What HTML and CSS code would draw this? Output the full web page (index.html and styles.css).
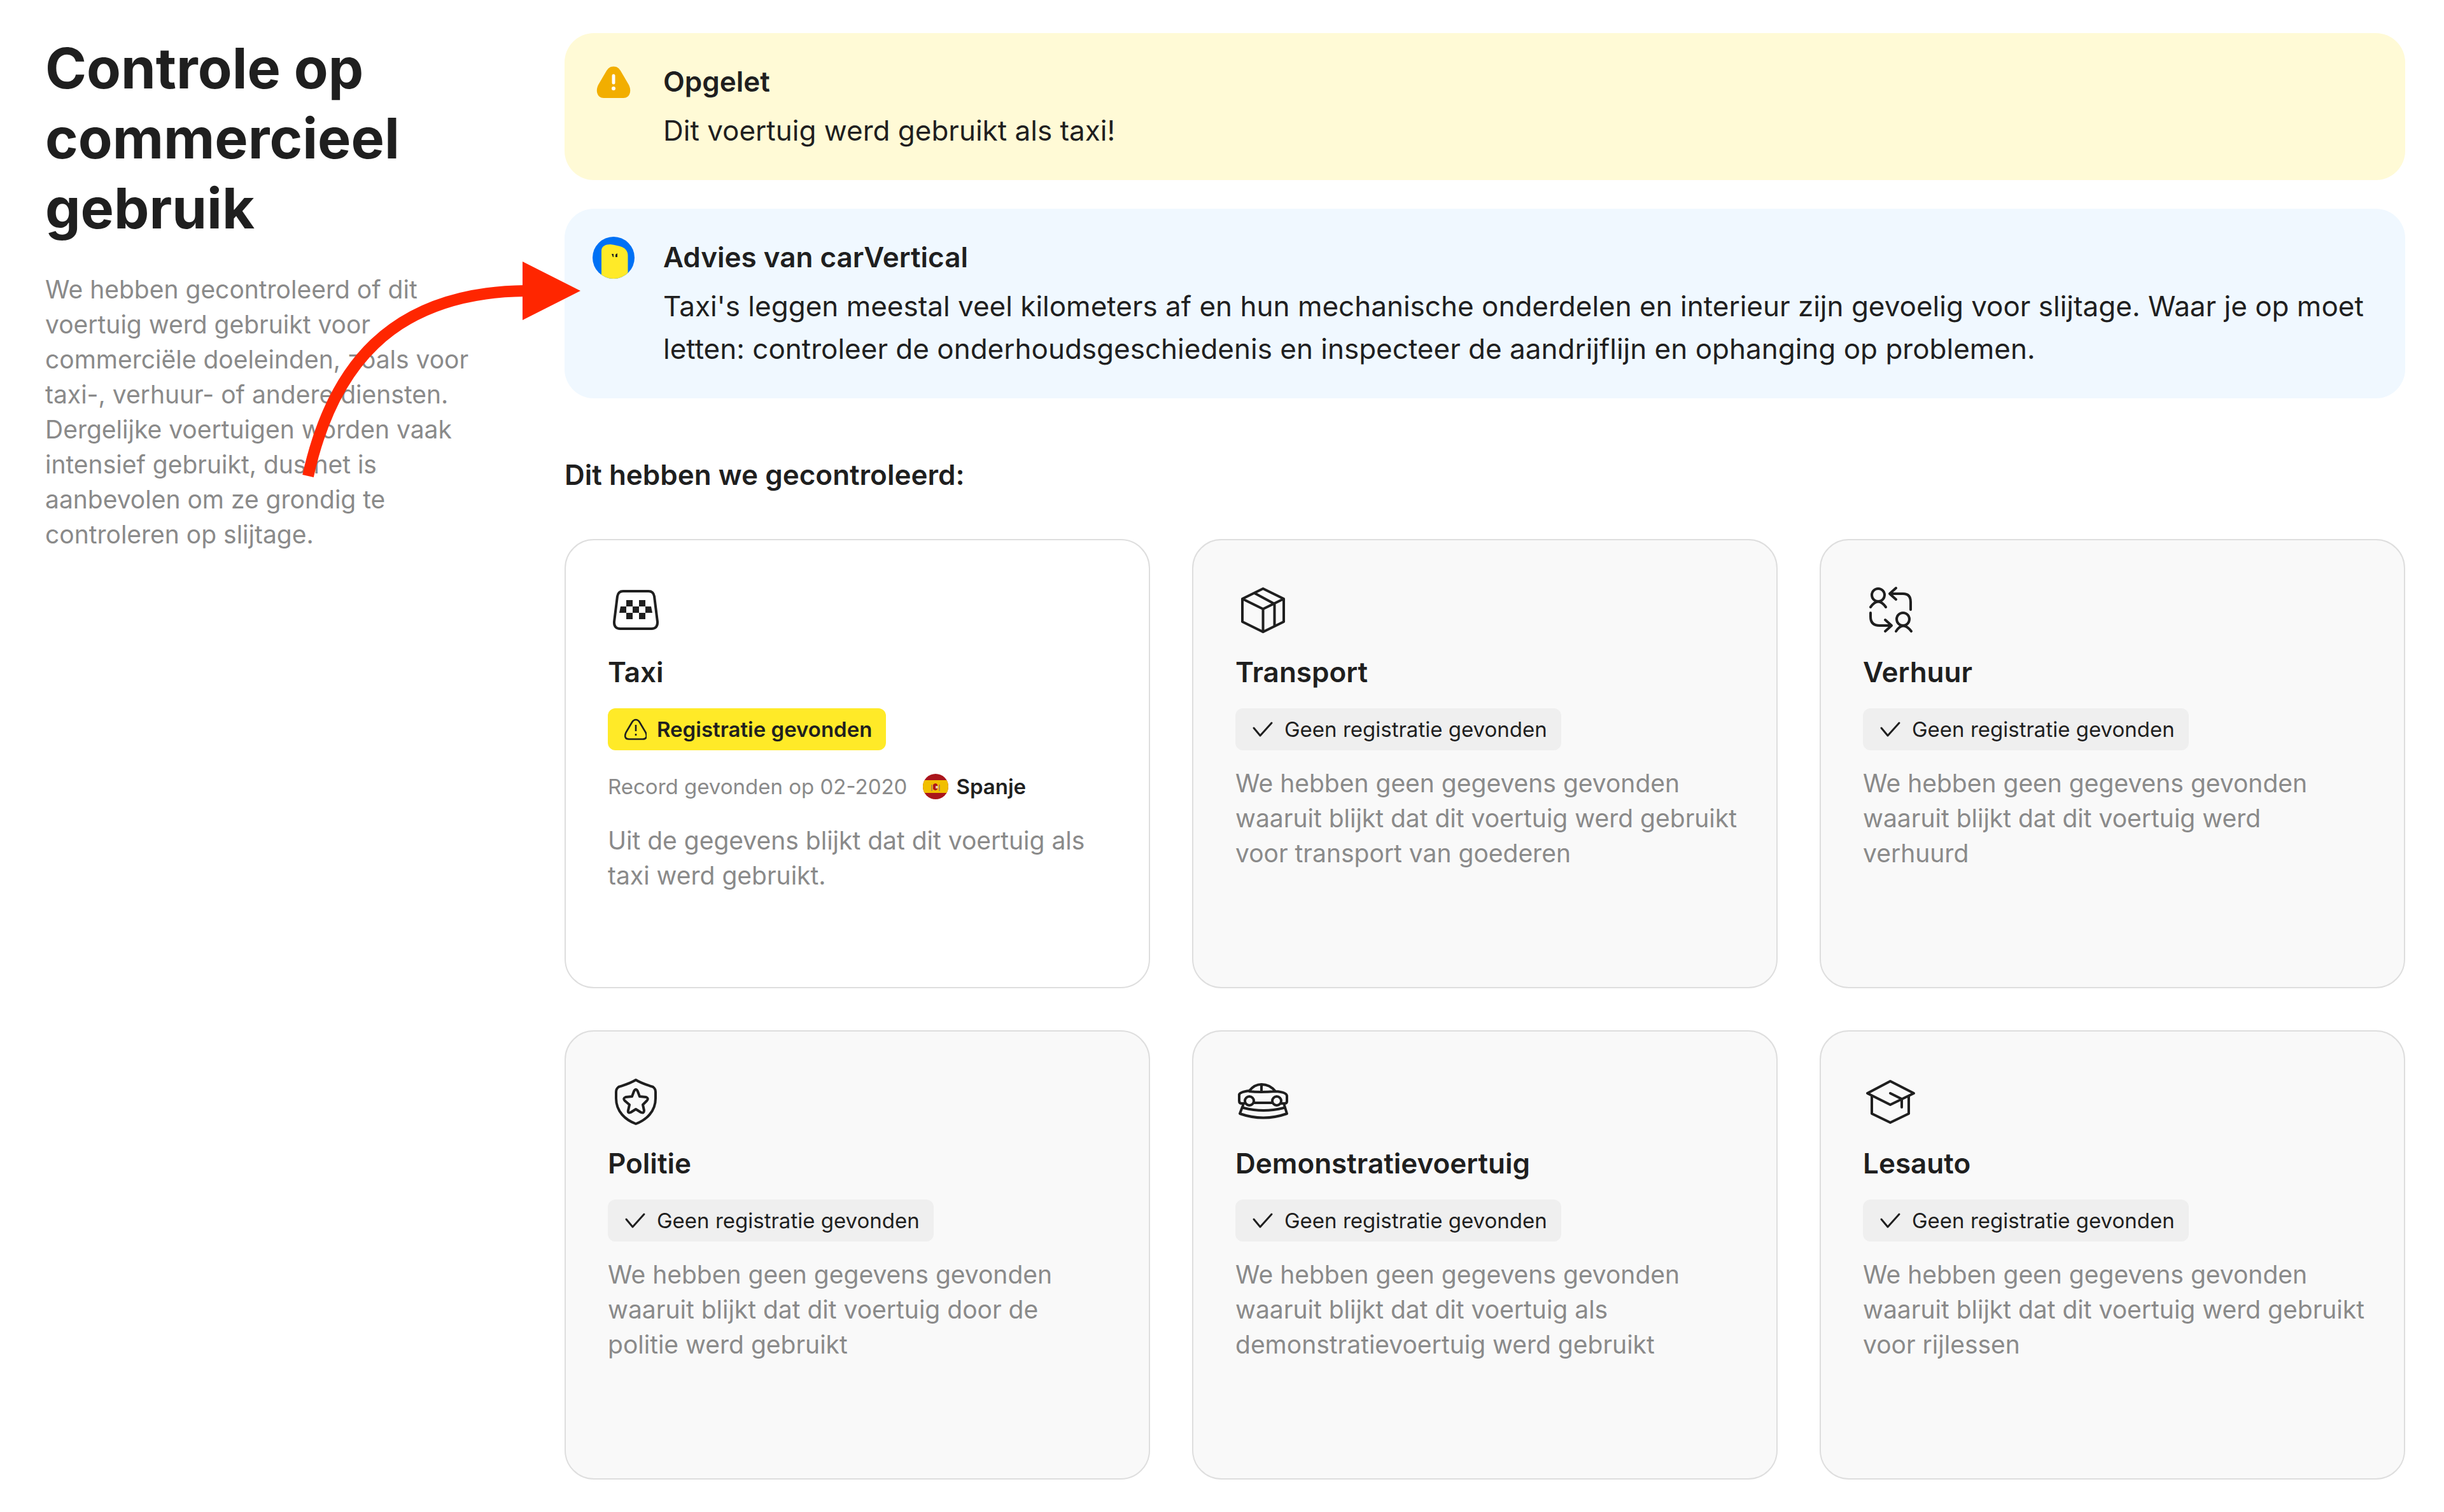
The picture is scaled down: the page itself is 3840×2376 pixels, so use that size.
FILE: index.html
```html
<!DOCTYPE html>
<html lang="nl">
<head>
<meta charset="utf-8">
<title>Controle op commercieel gebruik</title>
<link rel="stylesheet" href="styles.css">
</head>
<body>
<svg class="sprite" aria-hidden="true">
  <symbol id="check" viewBox="0 0 36 36"><path d="M4 16L14 28L32 8" fill="none" stroke="currentColor" stroke-width="3" stroke-linecap="round" stroke-linejoin="round"/></symbol>
</svg>
<main class="page">
  <aside class="intro">
    <h1 class="intro-title">Controle op commercieel gebruik</h1>
    <p class="intro-text">We hebben gecontroleerd of dit voertuig werd gebruikt voor commerciële doeleinden, zoals voor taxi-, verhuur- of andere diensten. Dergelijke voertuigen worden vaak intensief gebruikt, dus het is aanbevolen om ze grondig te controleren op slijtage.</p>
    <svg class="pointer" viewBox="0 0 440 350" aria-hidden="true">
      <path d="M13 337C50 170 140 48 355 46" fill="none" stroke="#ff2600" stroke-width="18"/>
      <path d="M350 0L441 46L350 92Z" fill="#ff2600"/>
    </svg>
  </aside>
  <div class="report">
    <section class="alert alert-warning">
      <svg class="alert-icon" viewBox="0 0 66 66" aria-hidden="true">
        <path d="M33 8.500C27 8.500 24 12 21.500 16L9.500 36.500C4 46 7 58 17.500 58H48.500C59 58 62 46 56.500 36.500L44.500 16C42 12 39 8.500 33 8.500Z" fill="#f2ae00"/>
        <path d="M33 23V34" stroke="#fff" stroke-width="5" stroke-linecap="round"/><circle cx="33" cy="43" r="3" fill="#fff"/>
      </svg>
      <div class="alert-body">
        <h2 class="alert-title">Opgelet</h2>
        <p class="alert-text">Dit voertuig werd gebruikt als taxi!</p>
      </div>
    </section>
    <section class="alert alert-advice">
      <svg class="alert-icon" viewBox="0 0 66 66" aria-hidden="true">
        <defs><clipPath id="face"><circle cx="33" cy="33" r="33"/></clipPath></defs>
        <g clip-path="url(#face)"><rect width="66" height="66" fill="#0071f5"/>
        <path d="M14 66V22C14 15 20 12 28 12C35 13 41 14 46 16C53 19 55.500 24 55.500 30V66Z" fill="#ffea28"/></g>
        <path d="M30 27h3v5h-1zM36 28l3-2v6h-3z" fill="#1f1f1f"/>
      </svg>
      <div class="alert-body">
        <h2 class="alert-title">Advies van carVertical</h2>
        <p class="alert-text">Taxi's leggen meestal veel kilometers af en hun mechanische onderdelen en interieur zijn gevoelig voor slijtage. Waar je op moet letten: controleer de onderhoudsgeschiedenis en inspecteer de aandrijflijn en ophanging op problemen.</p>
      </div>
    </section>
    <h2 class="checks-title">Dit hebben we gecontroleerd:</h2>
    <div class="checks">
      <article class="card card-found">
        <svg class="card-icon" viewBox="0 0 88 88" aria-hidden="true">
          <path d="M24 14H64Q71.500 14 73 22L78 62Q78.500 73 68.500 73H19.500Q9.500 73 10 62L15 22Q16.500 14 24 14Z" class="line"/>
          <path d="M29 28H39V38H49V28H59V38H68L70 48H59V58H49V48H39V58H29V48H18L20 38H29ZM29 38V48H39V38ZM49 38V48H59V38Z" fill="currentColor" fill-rule="evenodd"/>
        </svg>
        <h3 class="card-title">Taxi</h3>
        <p class="badge badge-found"><svg class="badge-icon" viewBox="0 0 36 36" aria-hidden="true"><path d="M19 3C16 3 14.500 4.500 13 7L3.500 23C1 29 2 33.500 8 33.500H30C36 33.500 37 29 34.500 23L25 7C23.500 4.500 22 3 19 3Z" fill="none" stroke="currentColor" stroke-width="2.600"/><path d="M19 11V21M19 25V28" stroke="currentColor" stroke-width="2.600"/></svg>Registratie gevonden</p>
        <div class="record"><span>Record gevonden op 02-2020</span>
          <span class="country"><svg class="flag" viewBox="0 0 40 40" aria-hidden="true"><defs><clipPath id="disc"><circle cx="20" cy="20" r="20"/></clipPath></defs><g clip-path="url(#disc)"><rect width="40" height="40" fill="#aa151b"/><rect y="10" width="40" height="20" fill="#f1bf00"/></g><path d="M13 17h2v10h-2zM25 17h2v10h-2z" fill="#b9834d"/><path d="M16 17q4-4 7 0v7q-3 4-7 0z" fill="#ad1519"/><path d="M20 19h4v4h-4z" fill="#e8c5a0"/></svg>Spanje</span>
        </div>
        <p class="card-text">Uit de gegevens blijkt dat dit voertuig als taxi werd gebruikt.</p>
      </article>
      <article class="card">
        <svg class="card-icon" viewBox="0 0 88 88" aria-hidden="true"><path d="M43.500 10L76 26V62L43.500 78L11 62V26ZM11 26L43.500 42L76 26M43.500 42V78M30 17L61.500 34V69" class="line"/></svg>
        <h3 class="card-title">Transport</h3>
        <p class="badge"><svg class="badge-icon" aria-hidden="true"><use href="#check"/></svg>Geen registratie gevonden</p>
        <p class="card-text">We hebben geen gegevens gevonden waaruit blijkt dat dit voertuig werd gebruikt voor transport van goederen</p>
      </article>
      <article class="card">
        <svg class="card-icon" viewBox="0 0 88 88" aria-hidden="true"><g class="line"><circle cx="24" cy="20" r="10"/><path d="M12 39Q24 22 36 39"/><circle cx="63" cy="58" r="10"/><path d="M52 77Q63 60 76 77"/><path d="M52 9L42 18L52 27M42 18H63Q75 18 75 31V43M12 48V54Q12 68 26 68H45M35 59L45 68L35 77"/></g></svg>
        <h3 class="card-title">Verhuur</h3>
        <p class="badge"><svg class="badge-icon" aria-hidden="true"><use href="#check"/></svg>Geen registratie gevonden</p>
        <p class="card-text">We hebben geen gegevens gevonden waaruit blijkt dat dit voertuig werd verhuurd</p>
      </article>
      <article class="card">
        <svg class="card-icon" viewBox="0 0 88 88" aria-hidden="true"><path d="M44 10C34 16 26 18 17 21Q13 24 13 29V39C13 60 28 73 44 79C60 73 75 60 75 39V29Q75 24 71 21C62 18 54 16 44 10Z" class="line"/><path d="M41 28Q44 22 47 28L50 36L60 37Q65 39 61 43L55 49L57 58Q57 63 52 61L44 56L36 61Q31 63 32 58L34 49L27 43Q23 39 28 37L38 36Z" class="line"/></svg>
        <h3 class="card-title">Politie</h3>
        <p class="badge"><svg class="badge-icon" aria-hidden="true"><use href="#check"/></svg>Geen registratie gevonden</p>
        <p class="card-text">We hebben geen gegevens gevonden waaruit blijkt dat dit voertuig door de politie werd gebruikt</p>
      </article>
      <article class="card">
        <svg class="card-icon" viewBox="0 0 88 88" aria-hidden="true"><g class="line"><path d="M14 47H10Q6 47 6 43V33Q7 29 22 27Q30 17 41 17Q54 17 63 28Q80 29 81 35V44Q81 47 77 47H72M30 46H57M22 28Q38 30 63 28M41 18V29"/><circle cx="22" cy="43" r="7"/><circle cx="65" cy="43" r="7"/><path d="M12 50L7 63Q44 76 81 63L77 50M13 54Q44 62 76 54"/></g></svg>
        <h3 class="card-title">Demonstratievoertuig</h3>
        <p class="badge"><svg class="badge-icon" aria-hidden="true"><use href="#check"/></svg>Geen registratie gevonden</p>
        <p class="card-text">We hebben geen gegevens gevonden waaruit blijkt dat dit voertuig als demonstratievoertuig werd gebruikt</p>
      </article>
      <article class="card">
        <svg class="card-icon" viewBox="0 0 88 88" aria-hidden="true"><path d="M43 12L80 31L43 49L7 31ZM14 35V63L43 77L72 63V35M43 31L61 40V53" class="line"/></svg>
        <h3 class="card-title">Lesauto</h3>
        <p class="badge"><svg class="badge-icon" aria-hidden="true"><use href="#check"/></svg>Geen registratie gevonden</p>
        <p class="card-text">We hebben geen gegevens gevonden waaruit blijkt dat dit voertuig werd gebruikt voor rijlessen</p>
      </article>
    </div>
  </div>
</main>
</body>
</html>
```

FILE: styles.css
```css
* { box-sizing: border-box; }
body {
  margin: 0;
  background: #fff;
  color: #1f1f1f;
  font-family: Inter, "Liberation Sans", sans-serif;
}
h1, h2, h3, p { margin: 0; }
.sprite { display: none; }
.page {
  display: grid;
  grid-template-columns: 680px 1fr;
  gap: 136px;
  padding: 52px 61px 52px 71px;
}
.intro { position: relative; }
.intro-title { font-size: 88px; line-height: 110px; font-weight: 700; }
.intro-text { margin-top: 45px; font-size: 39px; line-height: 55px; color: #8a8a8a; }
.pointer { position: absolute; left: 400px; top: 359px; width: 440px; height: 350px; z-index: 1; overflow: visible; }
.alert {
  display: flex;
  gap: 45px;
  padding: 44px;
  border-radius: 46px;
}
.alert + .alert { margin-top: 45px; }
.alert-warning { background: #fffad6; }
.alert-advice { background: #f0f8ff; }
.alert-icon { flex: none; width: 66px; height: 66px; }
.alert-title { font-size: 44px; line-height: 64px; font-weight: 600; }
.alert-text { margin-top: 12px; font-size: 44px; line-height: 67px; }
.checks-title { margin: 87px 0 68px; font-size: 44px; line-height: 66px; font-weight: 600; }
.checks {
  display: grid;
  grid-template-columns: repeat(3, 1fr);
  grid-auto-rows: minmax(706px, auto);
  gap: 66px;
}
.card {
  display: flex;
  flex-direction: column;
  align-items: flex-start;
  gap: 24px;
  padding: 66px 62px 66px 66px;
  border: 2px solid #dedede;
  border-radius: 46px;
  background: #f9f9f9;
}
.card-found { background: #fff; }
.card-icon { flex: none; width: 88px; height: 88px; }
.line { fill: none; stroke: currentColor; stroke-width: 4; stroke-linecap: round; stroke-linejoin: round; }
.card-title { margin-top: -4px; font-size: 44px; line-height: 66px; font-weight: 600; }
.badge {
  display: flex;
  align-items: center;
  gap: 16px;
  height: 66px;
  padding: 0 22px 0 25px;
  border-radius: 12px;
  background: #efefef;
  font-size: 33px;
  line-height: 48px;
}
.badge-found { background: #ffea28; font-weight: 600; }
.badge-icon { width: 36px; height: 36px; }
.record {
  display: flex;
  align-items: center;
  gap: 25px;
  height: 66px;
  font-size: 33px;
  line-height: 48px;
  color: #8a8a8a;
}
.country { display: flex; align-items: center; gap: 12px; color: #1f1f1f; font-weight: 600; }
.flag { width: 40px; height: 40px; }
.card-text { font-size: 39px; line-height: 55px; color: #8a8a8a; }
```
